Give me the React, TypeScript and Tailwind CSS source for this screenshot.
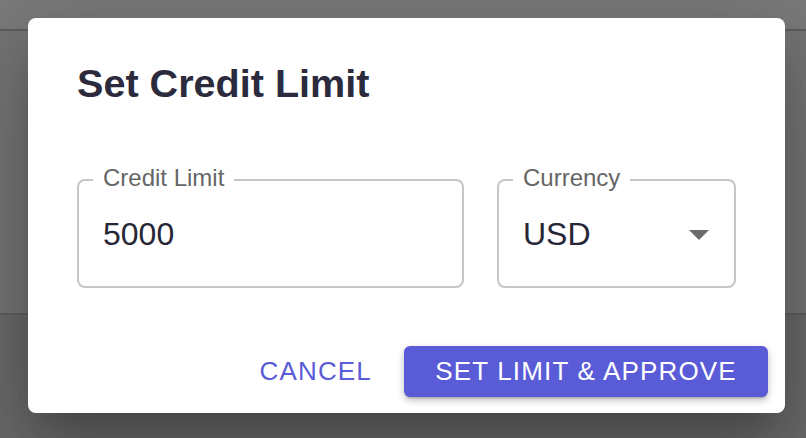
import React from "react";

const font = { fontFamily: '"Liberation Sans", Arial, sans-serif' };

function OutlinedField({
  label,
  value,
  width,
  select,
}: {
  label: string;
  value: string;
  width: string;
  select?: boolean;
}) {
  return (
    <div
      className={`relative flex h-[109px] ${width} items-center justify-between rounded-[8px] border-2 border-[#c6c6c6] pl-[24px] pr-[25px]`}
    >
      <span className="absolute left-[14px] top-[-17px] bg-white px-[10px] text-[24px] leading-[28px] text-[#666666]">
        {label}
      </span>
      <span className="text-[32px] leading-[38px] text-[#272637]">{value}</span>
      {select && (
        <svg width="20" height="10" viewBox="0 0 20 10" className="mt-[2px]">
          <path d="M0 0 L20 0 L10 10 Z" fill="#6b6b6b" />
        </svg>
      )}
    </div>
  );
}

export default function App() {
  return (
    <div className="relative h-[438px] w-[806px] overflow-hidden bg-[#737373]" style={font}>
      {/* page behind the backdrop */}
      <div className="flex h-full flex-col">
        <div className="h-[29px] bg-[#7a7a7a]" />
        <div className="h-[2px] bg-[#5e5e5e]" />
        <div className="h-[282px] bg-[#757575]" />
        <div className="h-[2px] bg-[#5f5f5f]" />
        <div className="flex-1 bg-[#6a6a6a]" />
      </div>

      {/* dialog */}
      <div className="absolute left-[28px] top-[18px] flex h-[395px] w-[757px] flex-col rounded-[8px] bg-white shadow-[0_22px_30px_-14px_rgba(0,0,0,0.2),0_48px_76px_6px_rgba(0,0,0,0.14),0_18px_92px_16px_rgba(0,0,0,0.12)]">
        <h2 className="pl-[49px] pt-[41px] text-[39.6px] font-bold leading-[48px] text-[#2c2b3e]">
          Set Credit Limit
        </h2>

        <div className="mt-[72px] flex gap-[33px] pl-[49px]">
          <OutlinedField label="Credit Limit" value="5000" width="w-[387px]" />
          <OutlinedField label="Currency" value="USD" width="w-[239px]" select />
        </div>

        <div className="mt-[58px] flex items-center justify-end gap-[16px] pr-[17px]">
          <button
            type="button"
            className="flex h-[51px] items-center px-[16px] text-[26px] uppercase tracking-[0.045em] text-[#5a5bd7]"
          >
            Cancel
          </button>
          <button
            type="button"
            className="flex h-[51px] w-[364px] items-center justify-center rounded-[6px] bg-[#5a5bd7] text-[26px] uppercase tracking-[0.045em] text-white shadow-[0_3px_2px_-2px_rgba(0,0,0,0.2),0_4px_6px_0_rgba(0,0,0,0.14),0_2px_10px_0_rgba(0,0,0,0.12)]"
          >
            Set Limit &amp; Approve
          </button>
        </div>
      </div>
    </div>
  );
}
